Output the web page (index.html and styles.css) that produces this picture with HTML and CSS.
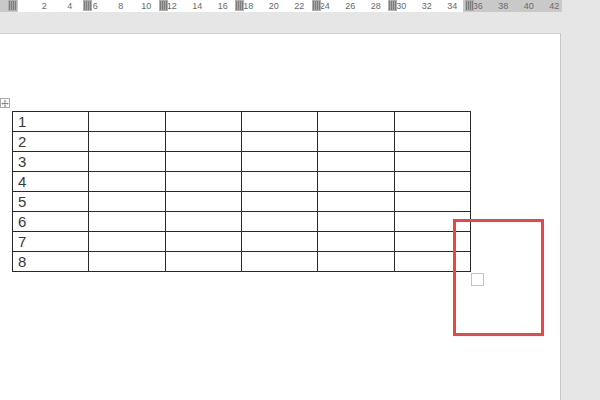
FILE: index.html
```html
<!DOCTYPE html>
<html lang="en">
  <head>
    <meta charset="UTF-8" />
    <meta name="viewport" content="width=device-width, initial-scale=1.0" />
    <title>Table Layout</title>
    <link rel="stylesheet" href="styles.css">
  </head>
  <body>
    <div class="ruler">
      <div class="ruler-scale">
        <span></span><span>2</span><span>4</span><span>6</span><span>8</span>
        <span>10</span><span>12</span><span>14</span><span>16</span><span>18</span>
        <span>20</span><span>22</span><span>24</span><span>26</span><span>28</span>
        <span>30</span><span>32</span><span>34</span><span>36</span><span>38</span>
        <span>40</span><span>42</span>
      </div>
      <i class="marker m0"></i>
      <i class="marker m1"></i>
      <i class="marker m2"></i>
      <i class="marker m3"></i>
      <i class="marker m4"></i>
      <i class="marker m5"></i>
      <i class="marker m6"></i>
    </div>

    <div class="page">
      <div class="table-wrap">
        <span class="move-handle">
          <svg width="9" height="9" viewBox="0 0 9 9">
            <path d="M4.5 1v7M1 4.5h7M3.5 2l1-1 1 1M3.5 7l1 1 1-1M2 3.5l-1 1 1 1M7 3.5l1 1-1 1" fill="none" stroke="#666" stroke-width="0.8" />
          </svg>
        </span>
        <table class="grid">
          <tbody id="rows"></tbody>
        </table>
        <span class="resize-handle"></span>
      </div>
      <div class="highlight"></div>
    </div>

    <script>
      const rows = document.getElementById("rows");

      for (let i = 1; i <= 8; i++) {
        const tr = document.createElement("tr");
        tr.innerHTML = `<td>${i}</td>` + "<td></td>".repeat(5);
        rows.appendChild(tr);
      }
    </script>
  </body>
</html>
```

FILE: styles.css
```css
* {
  box-sizing: border-box;
  margin: 0;
  padding: 0;
}

body {
  background: #e6e6e6;
  font-family: "Liberation Sans", Arial, sans-serif;
  height: 400px;
  overflow: hidden;
}

.ruler {
  position: relative;
  width: 562px;
  height: 12px;
  background: linear-gradient(90deg, #c9c9c9 0 18px, #fff 18px 463px, #c9c9c9 463px);
}

.ruler-scale {
  display: flex;
  padding-left: 6px;
  height: 12px;
}

.ruler-scale span {
  width: 25.5px;
  flex: none;
  text-align: center;
  font-size: 9px;
  line-height: 12px;
  color: #6a6a6a;
}

.marker {
  position: absolute;
  top: 0;
  width: 9px;
  height: 11px;
  background: repeating-linear-gradient(90deg, #7e7e7e 0 1px, #a8a8a8 1px 2px);
  border: 1px solid #b0b0b0;
}

.m0 { left: 8px; }
.m1 { left: 83px; }
.m2 { left: 159px; }
.m3 { left: 235px; }
.m4 { left: 312px; }
.m5 { left: 388px; }
.m6 { left: 465px; }

.page {
  position: relative;
  margin-top: 21px;
  width: 561px;
  height: 367px;
  background: #fff;
  border-top: 1px solid #d2d2d2;
  border-right: 1px solid #c6c6c6;
  padding: 77px 0 0 12px;
}

.table-wrap {
  position: relative;
  width: 459px;
}

.grid {
  border-collapse: collapse;
  table-layout: fixed;
  width: 459px;
}

.grid td {
  border: 1px solid #2a2a2a;
  height: 20px;
  padding: 0 0 0 5px;
  font-size: 15px;
  line-height: 18px;
  color: #3a3a3a;
  vertical-align: bottom;
}

.move-handle {
  position: absolute;
  left: -12px;
  top: -13px;
  width: 10px;
  height: 10px;
  border: 1px solid #aaa;
  background: #fff;
  display: flex;
  align-items: center;
  justify-content: center;
}

.resize-handle {
  position: absolute;
  right: -13px;
  bottom: -14px;
  width: 13px;
  height: 13px;
  border: 1px solid #c4c4c4;
  background: #fff;
}

.highlight {
  position: absolute;
  left: 453px;
  top: 185px;
  width: 91px;
  height: 117px;
  border: 3px solid #ef4444;
}
```
